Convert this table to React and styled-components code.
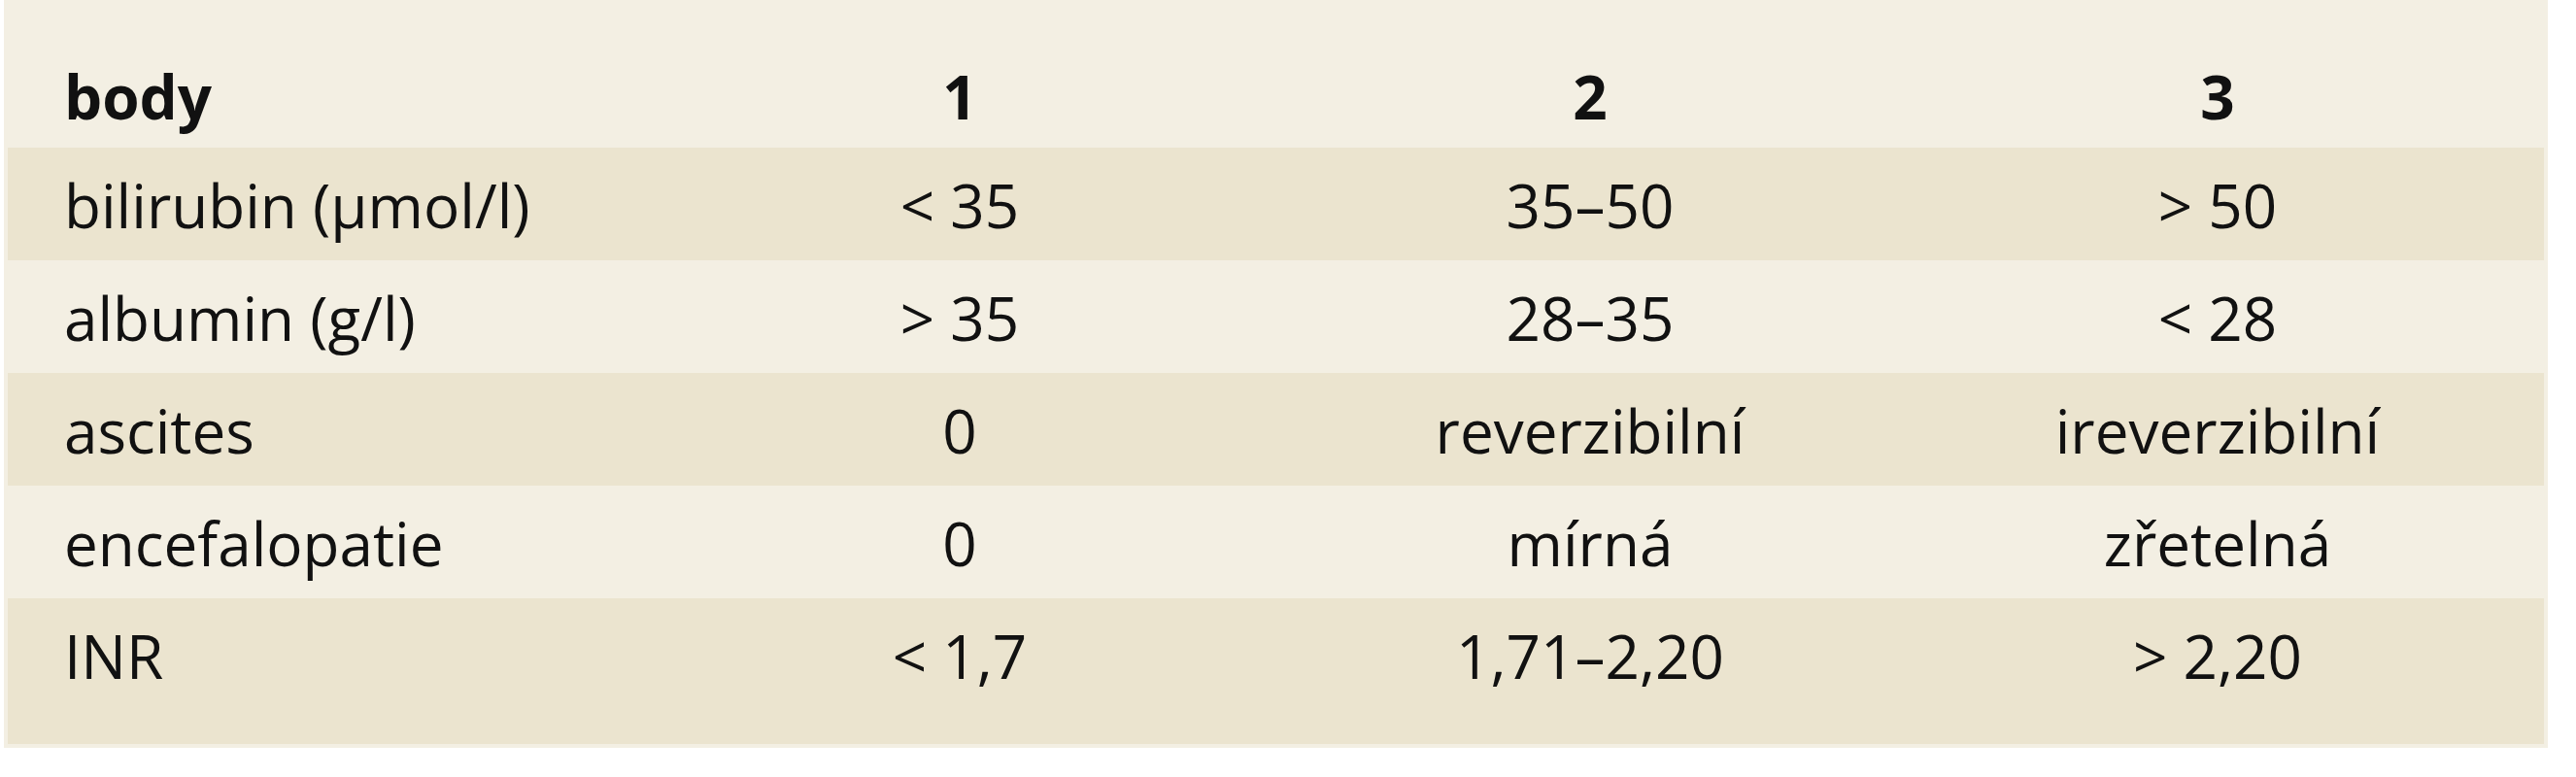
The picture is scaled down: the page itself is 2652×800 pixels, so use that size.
import React from "react";
import styled, { createGlobalStyle } from "styled-components";

const GlobalStyle = createGlobalStyle`
  html, body {
    margin: 0;
    padding: 0;
    background: #ffffff;
  }
`;

const Table = styled.div`
  width: 2611px;
  margin-left: 4px;
  padding: 0 4px 4px 4px;
  background: #f3efe3;
  font-family: "Open Sans", "Noto Sans", sans-serif;
  font-size: 62px;
  color: #111;
`;

const Row = styled.div`
  display: grid;
  grid-template-columns: 654px 652px 646px 646px;
  background: ${(p) => (p.$shaded ? "#ebe4cf" : "transparent")};
  padding: ${(p) => p.$pad || "17px 0 15px 0"};
  line-height: 84px;
  font-weight: ${(p) => (p.$head ? 700 : 400)};
`;

const LabelCell = styled.div`
  padding-left: 58px;
  white-space: nowrap;
`;

const ValueCell = styled.div`
  text-align: center;
  white-space: nowrap;
`;

const rows = [
  ["bilirubin (µmol/l)", "< 35", "35–50", "> 50"],
  ["albumin (g/l)", "> 35", "28–35", "< 28"],
  ["ascites", "0", "reverzibilní", "ireverzibilní"],
  ["encefalopatie", "0", "mírná", "zřetelná"],
  ["INR", "< 1,7", "1,71–2,20", "> 2,20"],
];

const App = () => {
  return (
    <>
      <GlobalStyle />
      <Table>
        <Row $head $pad="57px 0 11px 0">
          <LabelCell>body</LabelCell>
          <ValueCell>1</ValueCell>
          <ValueCell>2</ValueCell>
          <ValueCell>3</ValueCell>
        </Row>
        {rows.map((r, i) => (
          <Row
            key={r[0]}
            $shaded={i % 2 === 0}
            $pad={i === rows.length - 1 ? "17px 0 49px 0" : undefined}
          >
            <LabelCell>{r[0]}</LabelCell>
            <ValueCell>{r[1]}</ValueCell>
            <ValueCell>{r[2]}</ValueCell>
            <ValueCell>{r[3]}</ValueCell>
          </Row>
        ))}
      </Table>
    </>
  );
};

export default App;
